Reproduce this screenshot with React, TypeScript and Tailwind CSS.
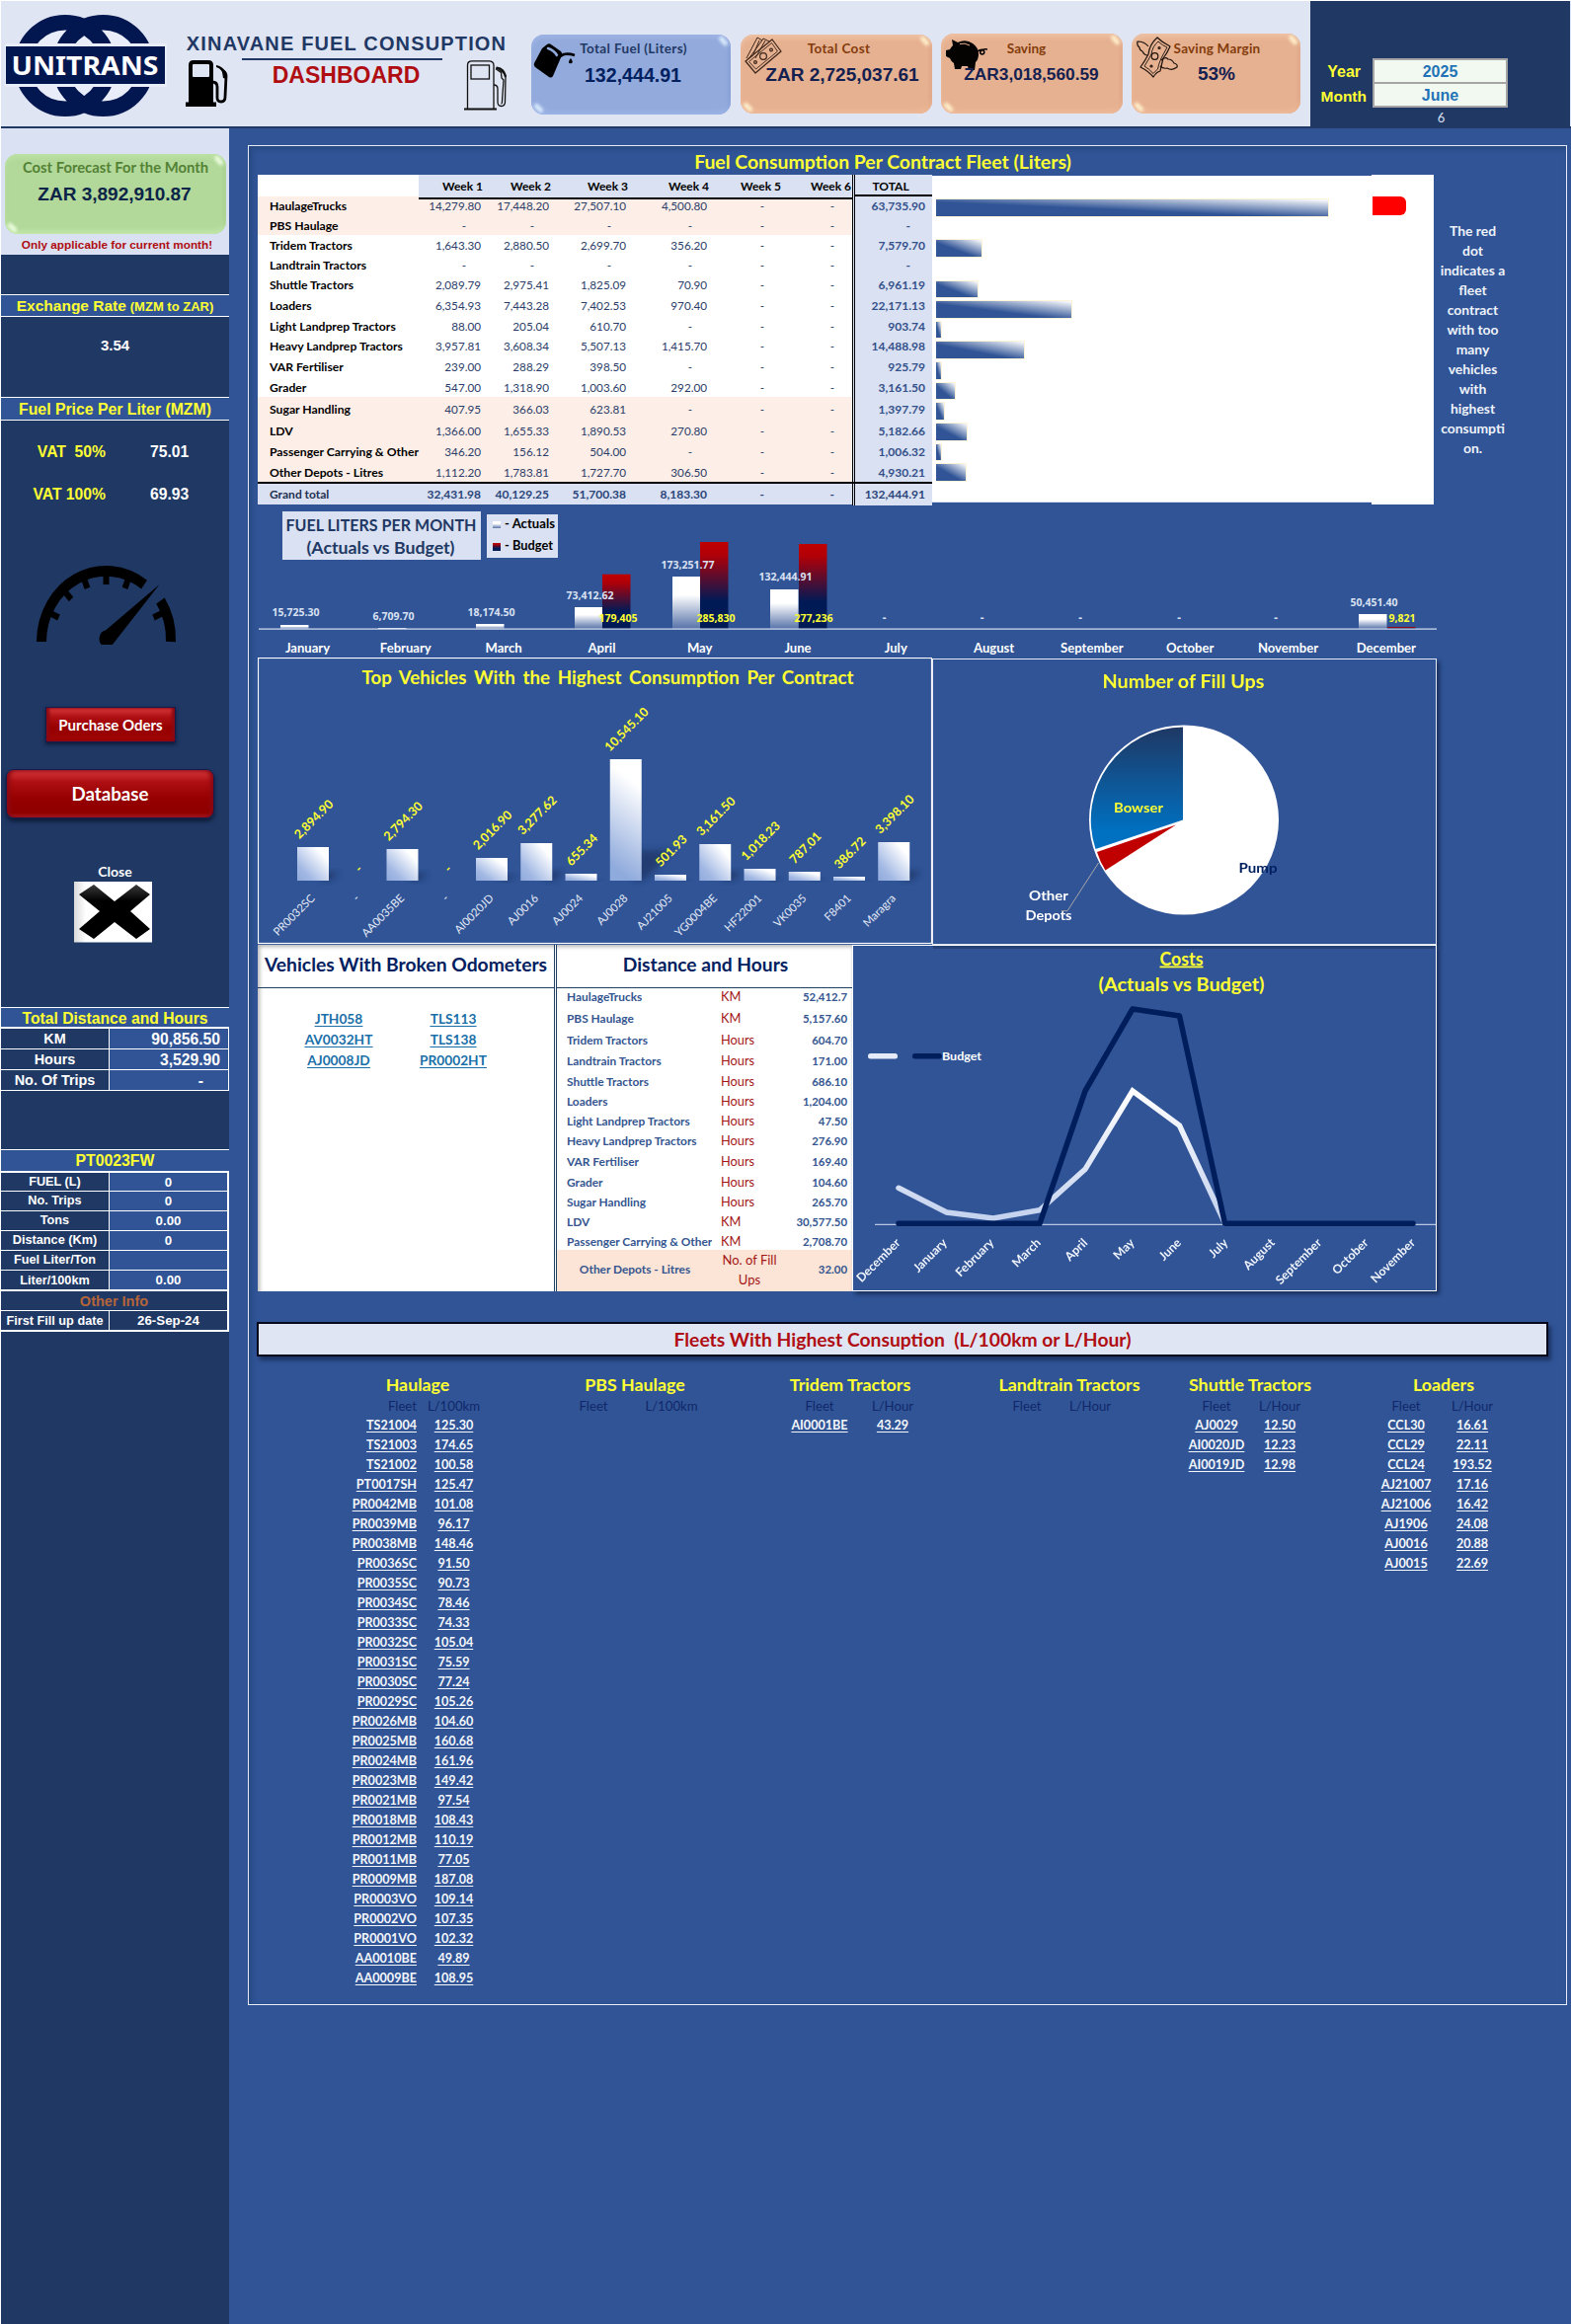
import React from "react";

const CAL = "font-['Lato',sans-serif]";
const ARI = "font-['Liberation_Sans',Arial,sans-serif]";

/* ---------------------------------------------------------------- header */

function Logo() {
  return (
    <svg className="mt-[13px] ml-[4px] shrink-0" width="164" height="106" viewBox="5 14 164 106">
      <circle cx="66" cy="66.5" r="36" fill="#e9edf9" />
      <circle cx="104.5" cy="66.5" r="36" fill="#e9edf9" />
      <circle cx="66" cy="66.5" r="43.7" fill="none" stroke="#02164f" strokeWidth="15.5" />
      <circle cx="104.5" cy="66.5" r="43.7" fill="none" stroke="#02164f" strokeWidth="15.5" />
      <rect x="5" y="44" width="164" height="44" fill="#e9edf9" />
      <rect x="6" y="47" width="161" height="38" fill="#02164f" />
      <text x="11.5" y="76" fontFamily="Noto Sans" fontWeight="700" fontSize="27" fill="#fff" textLength="149" lengthAdjust="spacingAndGlyphs">
        UNITRANS
      </text>
    </svg>
  );
}

function PumpSolid() {
  return (
    <svg width="43" height="47" viewBox="0 0 43 47">
      <path d="M3 5Q3 0 8 0H23Q28 0 28 5V43H3Z" fill="#000" />
      <rect x="7" y="4" width="17" height="13" rx="1" fill="#e0e5f3" />
      <rect x="0" y="42.500" width="31" height="4.500" fill="#000" />
      <path d="M27 22Q32 22 32 27V38Q32 42 36 42Q40 42 40 37L41 16Q41 13 38 11" fill="none" stroke="#000" strokeWidth="2.800" />
      <path d="M31 5Q37 6 41 12L42 19L38 18L37 12Q35 8 31 7Z" fill="#000" />
    </svg>
  );
}

function PumpOutline() {
  return (
    <svg width="43" height="51" viewBox="0 0 43 51" fill="none" stroke="#111" strokeWidth="1.300">
      <path d="M3.500 49V5Q3.500 .8 8 .8H25Q30 .8 30 5V49" />
      <path d="M0 49.500H33" strokeWidth="1.800" />
      <rect x="7" y="5" width="18.500" height="14" />
      <path d="M30 25Q34 25 34 29V42Q34 46.500 37.500 46.500Q41.500 46.500 41.500 42L42 17Q42 14 39 12L33 7.500L32.500 9L37.500 12.500L38 18L40 20L38.500 42Q38.500 44 37.500 44" />
      <path d="M33 7.500Q40 8 42 17" strokeWidth="2.200" />
    </svg>
  );
}

function JugIcon() {
  return (
    <svg width="43" height="37" viewBox="0 0 43 37">
      <path d="M14 2Q16 .5 18 2L28 9Q30 11 29 13L20 34Q18.500 36.500 16 35L2 25Q0 23 1 21L9 6Z" fill="#000" />
      <path d="M15 6Q21 8 24 13" fill="none" stroke="#93aadc" strokeWidth="2.600" strokeLinecap="round" />
      <path d="M25 15L31 12Q36 11 42 13" fill="none" stroke="#000" strokeWidth="2.600" />
      <path d="M38 16Q41 20 39 21Q36 22 36 20Q36 18 38 16Z" fill="#000" />
    </svg>
  );
}

function BillsIcon() {
  return (
    <svg width="38" height="38" viewBox="0 0 38 38" fill="none" stroke="#3b2418" strokeWidth="1.200" strokeLinejoin="round">
      <path d="M1 25L28 3L37 15L11 37Z" />
      <path d="M4.500 25.500L27.500 6.500L33.500 15L11.500 33Z" strokeWidth=".9" />
      <circle cx="19" cy="20" r="3.400" />
      <circle cx="11" cy="26" r="1.400" />
      <circle cx="27" cy="13.500" r="1.400" />
      <path d="M2 22L13 1L18 4M4 23L17 5L19 2L25 5M9 18L15 4" strokeWidth="1" />
      <path d="M11 22L21 4" strokeWidth="1" />
    </svg>
  );
}

function PiggyIcon() {
  return (
    <svg width="42" height="31" viewBox="0 0 42 31">
      <path d="M6 0L12 3Q20 -1 27 4Q33 8 33 15Q33 20 30 23L29 31H23L22 27H16L15 30H9L8 24Q5 22 4 19L0 17V11L4 10Q5 8 7 6Z" fill="#050302" />
      <path d="M14 4.500Q19 3 24 6" fill="none" stroke="#e6b191" strokeWidth="1" />
      <path d="M32 12Q36 9 38 11Q40 14 37 15Q34 15 35 12Q37 9 42 10" fill="none" stroke="#050302" strokeWidth="1.600" />
    </svg>
  );
}

function WingedBillIcon() {
  return (
    <svg width="42" height="42" viewBox="0 0 42 42" fill="none" stroke="#1c120c" strokeWidth="1.200" strokeLinejoin="round">
      <path d="M21 1Q26 6 34 10Q31 17 27 22Q25 30 24 35Q20 36 17 41Q12 35 4 31Q9 24 12 18Q13 8 21 1Z" />
      <path d="M22 5Q26 9 31 11Q27 18 25 22Q22 29 21.500 33Q19 35 17 37.500Q13 33 8 30Q13 22 15 18Q16 10 22 5Z" strokeWidth=".9" />
      <circle cx="18.500" cy="20" r="3.300" />
      <circle cx="23" cy="11.500" r="1" />
      <circle cx="15" cy="30" r="1" />
      <path d="M12 10Q8 5 1 5Q0 9 3 11Q3 14 6 15Q8 19 11 19" />
      <path d="M25 24Q29 20 32 23Q36 23 38 27Q42 28 41 31Q36 35 31 32Q27 33 24 30" />
    </svg>
  );
}

function Bevel({ light }: { light: string }) {
  return (
    <span className="absolute inset-0 overflow-hidden rounded-[13px]">
      <span className={`absolute top-[4px] right-[2px] h-[5px] w-[11px] rotate-[50deg] rounded-full blur-[1.5px] ${light}`} />
      <span className={`absolute bottom-[4px] left-[2px] h-[5px] w-[11px] rotate-[45deg] rounded-full blur-[1.5px] ${light}`} />
    </span>
  );
}

type CardProps = { box: string; light: string; icon?: React.ReactNode; iconPos?: string; title: string; titleCls: string; value: string; valueCls: string };

function Card({ box, light, icon, iconPos, title, titleCls, value, valueCls }: CardProps) {
  return (
    <div className={`relative shrink-0 rounded-[13px] text-center ${box}`}>
      <Bevel light={light} />
      <div className={`${CAL} font-bold whitespace-nowrap ${titleCls}`}>{title}</div>
      {icon && <span className={`absolute ${iconPos}`}>{icon}</span>}
      <div className={`relative ${ARI} font-bold whitespace-nowrap ${valueCls}`}>{value}</div>
    </div>
  );
}

const ORANGE = "bg-[#e6b191] shadow-[inset_0_5px_5px_-2px_#efc4a6,inset_0_-5px_5px_-2px_#efbb99,inset_-2px_0_3px_#dba283]";

function Header() {
  return (
    <header className="flex h-[129px] items-start border-b-2 border-[#203864] bg-[#e0e5f3]">
      <Logo />
      <div className="mt-[31px] flex w-[368px] shrink-0 flex-col">
        <h1 className={`${ARI} pr-[4px] text-center text-[20px] leading-[24px] font-bold tracking-[1.15px] whitespace-nowrap text-[#1f3864]`}>
          XINAVANE FUEL CONSUPTION
        </h1>
        <div className="mt-[3px] ml-[76px] h-[2px] w-[203px] bg-[#1f3864]" />
        <div className="flex items-start justify-between pr-[24px] pl-[19px]">
          <PumpSolid />
          <div className={`${ARI} text-[23px] leading-[31px] font-bold text-[#b00d12]`}>DASHBOARD</div>
          <PumpOutline />
        </div>
      </div>
      <div className="mt-[33px] ml-px flex items-start">
        <Card
          box="h-[81px] w-[202px] mt-px bg-[#93aadc] shadow-[inset_0_5px_5px_-2px_#a0b6e6,inset_0_-5px_5px_-2px_#9db5e8,inset_-2px_0_3px_#8098d0]"
          light="bg-[#d7e9fb]"
          icon={<JugIcon />}
          iconPos="left-[2px] top-[8px]"
          title="Total Fuel (Liters)"
          titleCls="mt-[5px] pl-[5px] text-[13.500px] leading-[18px] tracking-[0.35px] text-[#1f3864]"
          value="132,444.91"
          valueCls="mt-[8px] pl-[4px] text-[19.600px] leading-[20px] text-[#002060]"
        />
        <Card
          box={`mt-px ml-[10px] h-[80px] w-[194px] ${ORANGE}`}
          light="bg-[#fdecc8]"
          icon={<BillsIcon />}
          iconPos="left-[4px] top-[2px]"
          title="Total Cost"
          titleCls="mt-[5px] pl-[5px] text-[13.500px] leading-[18px] tracking-[0.35px] text-[#833c0b]"
          value="ZAR 2,725,037.61"
          valueCls="mt-[8px] pl-[12px] text-[19px] leading-[20px] text-[#14204f]"
        />
        <Card
          box={`ml-[9px] h-[81px] w-[184px] ${ORANGE}`}
          light="bg-[#fdecc8]"
          icon={<PiggyIcon />}
          iconPos="left-[5px] top-[6px]"
          title="Saving"
          titleCls="mt-[6px] pr-[11px] text-[13.500px] leading-[18px] text-[#833c0b]"
          value="ZAR3,018,560.59"
          valueCls="mt-[7px] pr-[1px] text-[17.300px] leading-[20px] text-[#14204f]"
        />
        <Card
          box={`ml-[9px] h-[81px] w-[171px] ${ORANGE}`}
          light="bg-[#fdecc8]"
          icon={<WingedBillIcon />}
          iconPos="left-[5px] top-[3px]"
          title="Saving Margin"
          titleCls="mt-[6px] pl-[2px] text-[13.500px] leading-[18px] tracking-[0.2px] text-[#833c0b]"
          value="53%"
          valueCls="mt-[7px] pl-[1px] text-[19px] leading-[20px] text-[#14204f]"
        />
      </div>
      <div className="ml-[10px] flex h-[127px] w-[263px] shrink-0 bg-[#203864] pt-[58px]">
        <div className={`${ARI} w-[63px] pr-[6px] text-right text-[15.500px] font-bold text-[#ffff33]`}>
          <div className="pr-[6px] text-[16px] leading-[27px]">Year</div>
          <div className="leading-[23px]">Month</div>
        </div>
        <div className="w-[137px] text-center">
          <div className={`${ARI} border-2 border-[#a5a5a5] bg-[#f2f9f1] text-[16px] font-bold text-[#1f72b5]`}>
            <div className="h-[24px] border-b-2 border-[#a5a5a5] leading-[24px]">2025</div>
            <div className="h-[22px] leading-[23px]">June</div>
          </div>
          <div className={`${CAL} pl-[2px] text-[13px] leading-[21px] text-[#d9e1f2]`}>6</div>
        </div>
      </div>
    </header>
  );
}

/* --------------------------------------------------------------- sidebar */

function Band({ children, cls }: { children: React.ReactNode; cls: string }) {
  return <div className={`${ARI} border-white bg-[#305496] text-center font-bold whitespace-nowrap text-[#ffff33] ${cls}`}>{children}</div>;
}

function Gauge() {
  const ticks = [25, 48, 69, 90, 111, 155];
  return (
    <svg className="ml-[35px] block" width="144" height="82" viewBox="36 571 144 82">
      <g transform="translate(107.500 650) scale(1 1.093)">
        <path d="M-65.500 0A65.500 65.500 0 0 1 38.500 -53" fill="none" stroke="#000" strokeWidth="10" />
        <path d="M55 -38A66 66 0 0 1 65.500 0" fill="none" stroke="#000" strokeWidth="10" />
        {ticks.map((t) => (
          <rect key={t} x="-62" y="-3" width="9" height="6" transform={`rotate(${t})`} fill="#000" />
        ))}
        <path d="M54 -53L6.500 2.500A6.500 6 0 0 1 -5 -7Z" fill="#000" />
        <circle cx="0" cy="-4" r="6.500" fill="#000" />
      </g>
    </svg>
  );
}

function InfoRow({ a, b, cls, aCls, bCls = "" }: { a: string; b: string; cls: string; aCls: string; bCls?: string }) {
  return (
    <div className={`flex border-b border-white ${cls}`}>
      <div className={`w-[110px] border-r border-white bg-[#203864] text-center whitespace-nowrap ${aCls}`}>{a}</div>
      <div className={`flex-1 ${bCls || "bg-[#305496] text-center"}`}>{b}</div>
    </div>
  );
}

function Sidebar() {
  return (
    <aside className="h-[2224px] w-[231px] shrink-0 bg-[#203864]">
      <div className="h-[128px] bg-[#d9e1f2] pt-[26px] pl-[4px]">
        <Card
          box="h-[81px] w-[224px] bg-[#b2d89a] pt-[4px] shadow-[inset_0_5px_5px_-2px_#bde3a6,inset_0_-5px_5px_-2px_#c4e9ab,inset_-2px_0_3px_#a3cc8b]"
          light="bg-[#e9fbda]"
          title="Cost Forecast For the Month"
          titleCls="text-[14.800px] leading-[18px] text-[#548235]"
          value="ZAR 3,892,910.87"
          valueCls="mt-[9px] pr-[2px] text-[19px] leading-[20px] text-[#0b2447]"
        />
        <div className={`${ARI} mt-[2px] text-center text-[11.800px] leading-[18px] font-bold whitespace-nowrap text-[#b00d12]`}>
          Only applicable for current month!
        </div>
      </div>

      <Band cls="mt-[40px] h-[23px] border-y text-[14px] leading-[22px]">
        <span className="text-[15.500px]">Exchange Rate</span> <span className="text-[13px]">(MZM to ZAR)</span>
      </Band>
      <div className={`${ARI} pt-[19px] text-center text-[15px] leading-[20px] font-bold text-white`}>3.54</div>

      <Band cls="mt-[42px] h-[24px] border-y text-[15.800px] leading-[23px]">Fuel Price Per Liter (MZM)</Band>
      <div className={`${ARI} mt-[21px] text-[15.700px] leading-[22px] font-bold text-white`}>
        <div className="flex">
          <div className="w-[106px] text-right whitespace-pre text-[#ffff33]">VAT  50%</div>
          <div className="ml-[45px]">75.01</div>
        </div>
        <div className="mt-[21px] flex">
          <div className="w-[106px] text-right whitespace-pre text-[#ffff33]">VAT 100%</div>
          <div className="ml-[45px]">69.93</div>
        </div>
      </div>

      <div className="pt-[59px]">
        <Gauge />
      </div>

      <button
        className={`${CAL} mt-[63px] ml-[45px] block h-[36px] w-[132px] border border-[#1b1a4c] bg-[linear-gradient(#d8393d,#ae0f12_28%,#960000_60%,#a00505)] text-[15px] font-bold whitespace-nowrap text-white shadow-[0_2px_4px_#0d1a36,inset_3px_0_3px_#8a0a14,inset_-3px_0_3px_#8a0a14]`}
      >
        Purchase Oders
      </button>
      <button
        className={`${CAL} mt-[27px] ml-[5px] block h-[50px] w-[211px] rounded-[8px] border border-[#1b1a4c] bg-[linear-gradient(#d8393d,#ae0f12_25%,#960000_60%,#8e0000_90%,#b02020)] text-[18.700px] font-bold text-white shadow-[0_3px_4px_#0d1a36,inset_3px_0_4px_#8a0a14,inset_-3px_0_4px_#8a0a14]`}
      >
        Database
      </button>
      <div className={`${CAL} mt-[44px] text-center text-[14px] leading-[20px] font-bold text-white`}>Close</div>
      <svg className="ml-[74px] block" width="80" height="62" viewBox="0 0 80 62">
        <defs>
          <linearGradient id="xbg" x1="0" x2="1">
            <stop offset="0" stopColor="#d9d9d9" />
            <stop offset=".15" stopColor="#fff" />
          </linearGradient>
          <linearGradient id="xfg" x1="0" y1="0" x2="0" y2="1">
            <stop offset="0" stopColor="#3a3a3a" />
            <stop offset=".3" stopColor="#000" />
          </linearGradient>
        </defs>
        <rect width="79" height="61.500" fill="url(#xbg)" />
        <path d="M5 13L20 3L41 20L63 3L77 13L57 30L77 48L63 58L41 41L20 58L5 48L26 30Z" fill="url(#xfg)" />
      </svg>

      <Band cls="mt-[65px] h-[20px] border-t text-[15.700px] leading-[22px]">Total Distance and Hours</Band>
      <div className={`${ARI} border-t-2 border-r border-white text-[15.700px] leading-[21px] font-bold text-white`}>
        <InfoRow cls="h-[21px]" aCls="text-[14.400px]" a="KM" b="90,856.50" bCls="bg-[#305496] text-right pr-[8px]" />
        <InfoRow cls="h-[21px]" aCls="text-[14.400px]" a="Hours" b="3,529.90" bCls="bg-[#305496] text-right pr-[8px]" />
        <InfoRow cls="h-[21px]" aCls="text-[14.400px]" a="No. Of Trips" b="-" bCls="bg-[#305496] text-right pr-[25px]" />
      </div>

      <Band cls="mt-[59px] h-[22px] border-t text-[15.800px] leading-[22px]">PT0023FW</Band>
      <div className={`${ARI} border-t-2 border-r-2 border-white text-[13.300px] leading-[19px] font-bold text-white`}>
        <InfoRow cls="h-[19px]" aCls="text-[12.700px]" a="FUEL (L)" b="0" />
        <InfoRow cls="h-[20px]" aCls="text-[12.700px]" a="No. Trips" b="0" />
        <InfoRow cls="h-[20px]" aCls="text-[12.700px]" a="Tons" b="0.00" />
        <InfoRow cls="h-[20px]" aCls="text-[12.700px]" a="Distance (Km)" b="0" />
        <InfoRow cls="h-[20px]" aCls="text-[12.700px]" a="Fuel Liter/Ton" b="" />
        <InfoRow cls="h-[21px] border-b-2 leading-[20px]" aCls="text-[12.700px]" a="Liter/100km" b="0.00" />
        <div className="h-[20px] border-b border-white bg-[#203864] text-center text-[14.500px] leading-[20px] text-[#b5653a]">Other Info</div>
        <InfoRow cls="h-[21px] border-b-2 leading-[20px]" aCls="text-[12.700px]" a="First Fill up date" b="26-Sep-24" bCls="bg-[#203864] text-center" />
      </div>
    </aside>
  );
}

/* ------------------------------------------------------------- top table */

type Row = { n: string; v: string[]; t: string; h: string; pink?: boolean };
const rows: Row[] = [
  { n: "HaulageTrucks", v: ["14,279.80", "17,448.20", "27,507.10", "4,500.80", "-", "-"], t: "63,735.90", h: "h-[19px]", pink: true },
  { n: "PBS Haulage", v: ["-", "-", "-", "-", "-", "-"], t: "-", h: "h-[20px]", pink: true },
  { n: "Tridem Tractors", v: ["1,643.30", "2,880.50", "2,699.70", "356.20", "-", "-"], t: "7,579.70", h: "h-[20px]" },
  { n: "Landtrain Tractors", v: ["-", "-", "-", "-", "-", "-"], t: "-", h: "h-[20px]" },
  { n: "Shuttle Tractors", v: ["2,089.79", "2,975.41", "1,825.09", "70.90", "-", "-"], t: "6,961.19", h: "h-[20px]" },
  { n: "Loaders", v: ["6,354.93", "7,443.28", "7,402.53", "970.40", "-", "-"], t: "22,171.13", h: "h-[21px]" },
  { n: "Light Landprep Tractors", v: ["88.00", "205.04", "610.70", "-", "-", "-"], t: "903.74", h: "h-[21px]" },
  { n: "Heavy Landprep Tractors", v: ["3,957.81", "3,608.34", "5,507.13", "1,415.70", "-", "-"], t: "14,488.98", h: "h-[20px]" },
  { n: "VAR Fertiliser", v: ["239.00", "288.29", "398.50", "-", "-", "-"], t: "925.79", h: "h-[21px]" },
  { n: "Grader", v: ["547.00", "1,318.90", "1,003.60", "292.00", "-", "-"], t: "3,161.50", h: "h-[21px]" },
  { n: "Sugar Handling", v: ["407.95", "366.03", "623.81", "-", "-", "-"], t: "1,397.79", h: "h-[22px]", pink: true },
  { n: "LDV", v: ["1,366.00", "1,655.33", "1,890.53", "270.80", "-", "-"], t: "5,182.66", h: "h-[22px]", pink: true },
  { n: "Passenger Carrying & Other", v: ["346.20", "156.12", "504.00", "-", "-", "-"], t: "1,006.32", h: "h-[21px]", pink: true },
  { n: "Other Depots - Litres", v: ["1,112.20", "1,783.81", "1,727.70", "306.50", "-", "-"], t: "4,930.21", h: "h-[21px]", pink: true },
];
const GRID = "grid grid-cols-[163px_66px_69px_78px_82px_73px_71px_81px]";
const TOT = "border-l-[3px] border-double border-black bg-[#d9e1f2]";

function WeekTable() {
  return (
    <div className={`${CAL} h-[334px] w-[683px] shrink-0 bg-white text-[12px]`}>
      <div className={`${GRID} h-[22px] font-bold text-black`}>
        <div />
        {["Week 1", "Week 2", "Week 3", "Week 4", "Week 5", "Week 6"].map((w) => (
          <div key={w} className="border-b-2 border-black bg-[#d9e1f2] pr-px text-right leading-[23px]">
            {w}
          </div>
        ))}
        <div className={`${TOT} pr-[4px] text-center`}>
          <div className="-mr-[4px] h-[22px] border-b-2 border-solid border-black pr-[6px] leading-[23px]">TOTAL</div>
        </div>
      </div>
      {rows.map((r) => (
        <div key={r.n} className={`${GRID} ${r.h} items-end ${r.pink ? "bg-[#fdeee7]" : "bg-white"}`}>
          <div className="pl-[12px] text-[12.200px] leading-[19px] font-bold whitespace-nowrap text-black">{r.n}</div>
          {r.v.map((v, i) => (
            <div key={i} className={`text-right text-[11.700px] leading-[19px] text-[#2b3d68] ${v === "-" ? "pr-[18px]" : "pr-[3px]"}`}>
              {v}
            </div>
          ))}
          <div className={`${TOT} flex h-full items-end justify-end leading-[19px] font-bold text-[#34508a] ${r.t === "-" ? "pr-[22px]" : "pr-[7px]"}`}>{r.t}</div>
        </div>
      ))}
      <div className={`${GRID} h-[23px] border-t-2 border-black bg-[#d9e1f2] leading-[22px] font-bold text-[#2a4479]`}>
        <div className="pl-[12px] text-[#1f2f50]">Grand total</div>
        {["32,431.98", "40,129.25", "51,700.38", "8,183.30", "-", "-"].map((v, i) => (
          <div key={i} className={`text-right ${v === "-" ? "pr-[18px]" : "pr-[3px]"}`}>
            {v}
          </div>
        ))}
        <div className={`${TOT} pr-[7px] text-right`}>132,444.91</div>
      </div>
    </div>
  );
}

function FleetBars() {
  const vals = [63735.9, 0, 7579.7, 0, 6961.19, 22171.13, 903.74, 14488.98, 925.79, 3161.5, 1397.79, 5182.66, 1006.32, 4930.21];
  return (
    <div className="mt-px flex h-[331px] w-[445px] shrink-0 flex-col gap-[2px] border-b border-[#d9e1f2] bg-white pt-[23px] pl-[4px]">
      {vals.map((v, i) => (
        <div
          key={i}
          className={`h-[18.650px] shrink-0 ${v ? "border border-l-0 border-[#fdf3d9] bg-[linear-gradient(to_top_right,#305496_42%,#fff)]" : ""}`}
          style={{ width: v * 0.006245 }}
        />
      ))}
    </div>
  );
}

/* ---------------------------------------------------------- month chart */

type TxProps = React.SVGProps<SVGTextElement> & { w?: number };
function Tx({ w, children, ...p }: TxProps) {
  return (
    <text fontFamily="Lato" fontWeight="700" textAnchor="middle" {...(w ? { textLength: w, lengthAdjust: "spacingAndGlyphs" } : {})} {...p}>
      {children}
    </text>
  );
}

const Y = "#ffff33";

function MonthChart() {
  const months = ["January", "February", "March", "April", "May", "June", "July", "August", "September", "October", "November", "December"];
  const act: [number, number, string, number, number][] = [
    [284, 633, "15,725.30", 624, 48],
    [383, 636, "6,709.70", 627.5, 42],
    [482, 632, "18,174.50", 623.5, 48],
    [582, 615, "73,412.62", 606.5, 48],
    [681, 584, "173,251.77", 575.5, 54],
    [780, 597, "132,444.91", 587.5, 54],
    [1376, 622, "50,451.40", 613.5, 48],
  ];
  const bud: [number, number, string, number, number][] = [
    [610, 581.7, "179,405", 626, 39],
    [709, 549, "285,830", 725, 39],
    [809, 551, "277,236", 824, 39],
    [1405, 635, "9,821", 1420, 27],
  ];
  return (
    <svg className="ml-[9px] block" width="1194" height="155" viewBox="261 511 1194 155">
      <defs>
        <linearGradient id="ga" x1="0" y1="0" x2="0" y2="1">
          <stop offset=".35" stopColor="#fff" />
          <stop offset="1" stopColor="#5672a8" />
        </linearGradient>
        <linearGradient id="gb" x1="0" y1="0" x2="0" y2="1">
          <stop offset="0" stopColor="#c00000" />
          <stop offset=".15" stopColor="#b00008" />
          <stop offset=".68" stopColor="#001a56" />
        </linearGradient>
      </defs>
      <rect x="286" y="518" width="201" height="49" fill="#d9e1f2" />
      <Tx x="386" y="538" fontSize="16.800" fill="#1f3864" w={193}>FUEL LITERS PER MONTH</Tx>
      <Tx x="385.500" y="561" fontSize="16.800" fill="#1f3864" w={150}>(Actuals vs Budget)</Tx>
      <rect x="493" y="521" width="72" height="44" fill="#d9e1f2" />
      <rect x="499" y="528" width="8" height="7" fill="url(#ga)" />
      <rect x="499" y="550" width="8" height="8" fill="url(#gb)" />
      <Tx x="511" y="535" fontSize="13" textAnchor="start" w={51}>- Actuals</Tx>
      <Tx x="511" y="557" fontSize="13" textAnchor="start" w={49}>- Budget</Tx>
      {act.map((a) => (
        <rect key={a[0]} x={a[0]} y={a[1]} width="28.500" height={637 - a[1]} fill="url(#ga)" />
      ))}
      {bud.map((b) => (
        <rect key={b[0]} x={b[0]} y={b[1]} width="28.500" height={637 - b[1]} fill="url(#gb)" />
      ))}
      <rect x="262" y="636.500" width="1193" height="1.200" fill="#d9e1f2" />
      {act.map((a) => (
        <Tx key={a[2]} x={a[0] + 15.5} y={a[3]} fontSize="10.500" fontFamily="Open Sans" fill="#d9e1f2" w={a[4]}>{a[2]}</Tx>
      ))}
      {bud.map((b) => (
        <Tx key={b[2]} x={b[3]} y="629.500" fontSize="10.300" fontFamily="Open Sans" fill={Y} w={b[4]}>{b[2]}</Tx>
      ))}
      {[895.6, 994.5, 1094, 1194, 1292].map((x) => (
        <Tx key={x} x={x} y="629.500" fontSize="11.500" fontFamily="Open Sans" fill="#d9e1f2">-</Tx>
      ))}
      {months.map((m, i) => (
        <Tx key={m} x={311.5 + i * 99.3} y="661" fontSize="13.100" fill="#fff">{m}</Tx>
      ))}
    </svg>
  );
}

/* -------------------------------------------------------- vehicle chart */

function VehicleChart() {
  const d: [string, string, number][] = [
    ["PR0032SC", "2,894.90", 858],
    ["-", "-", 892],
    ["AA0035BE", "2,794.30", 860],
    ["-", "-", 892],
    ["AI0020JD", "2,016.90", 869],
    ["AJ0016", "3,277.62", 854],
    ["AJ0024", "655.34", 885],
    ["AJ0028", "10,545.10", 769],
    ["AJ21005", "501.93", 886],
    ["YG0004BE", "3,161.50", 855],
    ["HF22001", "1,018.23", 880],
    ["VK0035", "787.01", 883],
    ["F8401", "386.72", 888],
    ["Maragra", "3,398.10", 853],
  ];
  return (
    <svg className="block shrink-0" width="683" height="291" viewBox="261 666 683 291">
      <defs>
        <linearGradient id="gv" x1="0" y1="1" x2="1" y2="0">
          <stop offset="0" stopColor="#8faadc" />
          <stop offset=".25" stopColor="#a3b9e4" />
          <stop offset=".8" stopColor="#fff" />
        </linearGradient>
        <linearGradient id="gvt" x1=".4" y1="1" x2=".6" y2="0">
          <stop offset=".05" stopColor="#8faadc" />
          <stop offset=".85" stopColor="#fff" />
        </linearGradient>
        <filter id="bl" x="-50%" y="-50%" width="200%" height="200%">
          <feGaussianBlur stdDeviation="3" />
        </filter>
      </defs>
      <rect x="261.500" y="666.500" width="682" height="289" fill="#305496" stroke="#fff" strokeWidth="1.200" />
      <Tx x="615.500" y="693" fontSize="18" wordSpacing="3" fill={Y} w={498}>Top Vehicles With the Highest Consumption Per Contract</Tx>
      {d.map(([, v, top], i) => {
        const x = 301 + i * 45.25;
        const h = 892 - top;
        return v === "-" ? null : (
          <path key={i} d={`M${x + 24} 892H${x + 34}L${x + 34 + h * 0.25} ${892 - h * 0.25}H${x + 28}Z`} fill="#14264f" opacity=".5" filter="url(#bl)" />
        );
      })}
      {d.map(([c, v, top], i) => {
        const x = 301 + i * 45.25;
        const cx = x + 16;
        const off = v === "-" ? 12 : v.length > 8 ? 30 : v.length > 6 ? 28 : 24;
        return (
          <g key={i}>
            {v !== "-" && <rect x={x} y={top} width="32" height={892 - top} fill={top < 800 ? "url(#gvt)" : "url(#gv)"} />}
            <Tx transform={`translate(${cx + 1} ${top - off}) rotate(-45)`} y="4" fontSize="12.500" fill={Y}>{v}</Tx>
            <Tx transform={`translate(${cx - 1} 907) rotate(-45)`} y="5" textAnchor="end" fontSize="11.300" fontWeight="400" fill="#e4eaf7">{c}</Tx>
          </g>
        );
      })}
    </svg>
  );
}

function PieChart() {
  return (
    <svg className="block shrink-0 overflow-visible drop-shadow-[3px_3px_2px_#1a2f5c]" width="511" height="290" viewBox="944 667 511 290">
      <defs>
        <linearGradient id="gp" x1="0" y1="0" x2="0" y2="1">
          <stop offset="0" stopColor="#1f3864" />
          <stop offset=".85" stopColor="#0070c0" />
        </linearGradient>
      </defs>
      <rect x="944.500" y="667.500" width="510" height="289" fill="#305496" stroke="#e6ebf6" strokeWidth="1" />
      <Tx x="1198.500" y="696.500" fontSize="18" fill={Y} w={164}>Number of Fill Ups</Tx>
      <circle cx="1199" cy="830.500" r="96" fill="#fff" />
      <path d="M1198 830.500V736.500A94 94 0 0 0 1109.500 860Z" fill="url(#gp)" />
      <path d="M1191 835.500L1111 863Q1114 873 1119.500 881.500Z" fill="#c00000" />
      <path d="M1112.500 874L1081 922.700H1075" fill="none" stroke="#a6a6a6" strokeWidth="1" />
      <Tx x="1153" y="823" fontSize="13.500" fill={Y} w={50}>Bowser</Tx>
      <Tx x="1274" y="884" fontSize="13.500" fill="#002060" w={39}>Pump</Tx>
      <Tx x="1062" y="912" fontSize="13.500" fill="#fff" w={40}>Other</Tx>
      <Tx x="1062" y="932" fontSize="13.500" fill="#fff" w={47}>Depots</Tx>
    </svg>
  );
}

/* ------------------------------------------------------ lower panel row */

function Odometers() {
  return (
    <div className={`${CAL} h-[351px] w-[300px] shrink-0 bg-white shadow-[inset_4px_4px_4px_-2px_#b5b5b5] font-bold`}>
      <div className="h-[44px] border-b border-[#1f4060] text-center text-[19.300px] leading-[39px] whitespace-nowrap text-[#002060]">
        Vehicles With Broken Odometers
      </div>
      <div className="mt-[20px] grid grid-cols-[116px_116px] pl-[24px] text-center text-[13.700px] leading-[21px] text-[#1a6fa8] underline underline-offset-2">
        {["JTH058", "TLS113", "AV0032HT", "TLS138", "AJ0008JD", "PR0002HT"].map((t) => (
          <a key={t}>{t}</a>
        ))}
      </div>
    </div>
  );
}

const dist: [string, string, string, string][] = [
  ["HaulageTrucks", "KM", "52,412.7", "h-[20px]"],
  ["PBS Haulage", "KM", "5,157.60", "h-[22px]"],
  ["Tridem Tractors", "Hours", "604.70", "h-[22px]"],
  ["Landtrain Tractors", "Hours", "171.00", "h-[21px]"],
  ["Shuttle Tractors", "Hours", "686.10", "h-[21px]"],
  ["Loaders", "Hours", "1,204.00", "h-[20px]"],
  ["Light Landprep Tractors", "Hours", "47.50", "h-[20px]"],
  ["Heavy Landprep Tractors", "Hours", "276.90", "h-[20px]"],
  ["VAR Fertiliser", "Hours", "169.40", "h-[21px]"],
  ["Grader", "Hours", "104.60", "h-[21px]"],
  ["Sugar Handling", "Hours", "265.70", "h-[20px]"],
  ["LDV", "KM", "30,577.50", "h-[20px]"],
  ["Passenger Carrying & Other", "KM", "2,708.70", "h-[20px]"],
];

function Distances() {
  return (
    <div className={`${CAL} h-[351px] w-[302px] shrink-0 border-l-[3px] border-double border-[#1f4060] bg-white text-[11.900px] font-bold text-[#34558f] shadow-[inset_0_4px_4px_-2px_#b5b5b5]`}>
      <div className="h-[44px] border-b border-[#1f4060] pl-[2px] text-center text-[19.200px] leading-[39px] text-[#002060]">Distance and Hours</div>
      {dist.map(([n, u, v, h]) => (
        <div key={n} className={`flex items-end pb-[2px] leading-[19px] ${h}`}>
          <div className="ml-[10px] w-[147px] overflow-hidden whitespace-nowrap">{n}</div>
          <div className="w-[62px] pl-[9px] text-[12.800px] font-normal text-[#a31515]">{u}</div>
          <div className="flex-1 pr-[5px] text-right text-[11.400px]">{v}</div>
        </div>
      ))}
      <div className="mt-[-3px] flex h-[42px] items-center bg-[#fce4d6] pb-[2px]">
        <div className="w-[158px] text-center">Other Depots - Litres</div>
        <div className="w-[74px] text-center text-[13px] leading-[20px] font-normal text-[#a31515]">
          No. of Fill
          <br />
          Ups
        </div>
        <div className="flex-1 pr-[5px] text-right text-[11.400px]">32.00</div>
      </div>
    </div>
  );
}

function Costs() {
  const m = ["December", "January", "February", "March", "April", "May", "June", "July", "August", "September", "October", "November"];
  return (
    <svg className="block shrink-0 overflow-visible drop-shadow-[3px_3px_2px_#1a2f5c]" width="592" height="351" viewBox="863 957 592 351">
      <defs>
        <linearGradient id="gl" gradientUnits="userSpaceOnUse" x1="0" y1="1105" x2="0" y2="1239">
          <stop offset="0" stopColor="#fff" />
          <stop offset="1" stopColor="#c3d1ee" />
        </linearGradient>
      </defs>
      <rect x="863.500" y="957.500" width="591" height="350" fill="#305496" stroke="#fff" strokeWidth="1" />
      <rect x="945" y="958" width="508" height="3" fill="#1f3864" opacity=".6" />
      <Tx x="1196.500" y="977.500" fontSize="18" fill={Y} w={44} textDecoration="underline">Costs</Tx>
      <Tx x="1196.500" y="1003.500" fontSize="18" fill={Y} w={168}>(Actuals vs Budget)</Tx>
      <rect x="886" y="1239.800" width="568" height="1" fill="#d9e1f2" />
      <polyline fill="none" stroke="url(#gl)" strokeWidth="5.500" strokeLinecap="round" strokeLinejoin="miter" points="910,1203.300 958.700,1228 1006,1234 1053,1225.700 1099,1184.300 1147,1105 1194.500,1140 1240.500,1239" />
      <polyline fill="none" stroke="#001d5c" strokeWidth="5.500" strokeLinecap="round" strokeLinejoin="round" points="910,1239.300 1053,1239.300 1099,1105 1147,1022 1194.500,1029 1240.500,1239.300 1431,1239.300" />
      <rect x="879" y="1067" width="30" height="5.500" rx="2.500" fill="#e4eaf8" />
      <rect x="924" y="1067" width="30" height="5.500" rx="2.500" fill="#001d5c" />
      <Tx x="954" y="1074" fontSize="11.800" textAnchor="start" fill="#fff" w={40}>Budget</Tx>
      {m.map((t, i) => (
        <Tx key={t} transform={`translate(${909 + i * 47.4} 1256) rotate(-45)`} y="5" textAnchor="end" fontSize="12.300" fill="#f0f4fc">
          {t}
        </Tx>
      ))}
    </svg>
  );
}

/* ---------------------------------------------------------- fleet lists */

type Fleet = { title: string; unit: string; ml: string; pad: string; a: string; b: string; rows: [string, string][] };
const fleets: Fleet[] = [
  {
    title: "Haulage", unit: "L/100km", ml: "ml-[91px]", pad: "pl-0", a: "w-[79px] text-right", b: "w-[75px]",
    rows: [
      ["TS21004", "125.30"], ["TS21003", "174.65"], ["TS21002", "100.58"], ["PT0017SH", "125.47"], ["PR0042MB", "101.08"], ["PR0039MB", "96.17"],
      ["PR0038MB", "148.46"], ["PR0036SC", "91.50"], ["PR0035SC", "90.73"], ["PR0034SC", "78.46"], ["PR0033SC", "74.33"], ["PR0032SC", "105.04"],
      ["PR0031SC", "75.59"], ["PR0030SC", "77.24"], ["PR0029SC", "105.26"], ["PR0026MB", "104.60"], ["PR0025MB", "160.68"], ["PR0024MB", "161.96"],
      ["PR0023MB", "149.42"], ["PR0021MB", "97.54"], ["PR0018MB", "108.43"], ["PR0012MB", "110.19"], ["PR0011MB", "77.05"], ["PR0009MB", "187.08"],
      ["PR0003VO", "109.14"], ["PR0002VO", "107.35"], ["PR0001VO", "102.32"], ["AA0010BE", "49.89"], ["AA0009BE", "108.95"],
    ],
  },
  { title: "PBS Haulage", unit: "L/100km", ml: "ml-[60px]", pad: "pl-0", a: "w-[76px] text-center", b: "w-[82px]", rows: [] },
  { title: "Tridem Tractors", unit: "L/Hour", ml: "ml-[58px]", pad: "pl-[8px]", a: "w-[82px] text-center", b: "w-[66px]", rows: [["AI0001BE", "43.29"]] },
  { title: "Landtrain Tractors", unit: "L/Hour", ml: "ml-[62px]", pad: "pl-[2px]", a: "w-[70px] text-center", b: "w-[58px]", rows: [] },
  {
    title: "Shuttle Tractors", unit: "L/Hour", ml: "ml-[23px]", pad: "pl-[10px]", a: "w-[72px] text-center", b: "w-[56px]",
    rows: [["AJ0029", "12.50"], ["AI0020JD", "12.23"], ["AI0019JD", "12.98"]],
  },
  {
    title: "Loaders", unit: "L/Hour", ml: "ml-[36px]", pad: "pl-[7px]", a: "w-[70px] text-center", b: "w-[64px]",
    rows: [["CCL30", "16.61"], ["CCL29", "22.11"], ["CCL24", "193.52"], ["AJ21007", "17.16"], ["AJ21006", "16.42"], ["AJ1906", "24.08"], ["AJ0016", "20.88"], ["AJ0015", "22.69"]],
  },
];

function FleetLists() {
  return (
    <div className={`${CAL} mt-[16px] flex items-start`}>
      {fleets.map((f) => (
        <div key={f.title} className={`w-[160px] shrink-0 ${f.ml}`}>
          <div className="text-center text-[17.800px] leading-[24px] font-bold whitespace-nowrap text-[#ffff33]">{f.title}</div>
          <div className={`flex text-[13.200px] leading-[20px] text-[#10286a] ${f.pad}`}>
            <div className={f.a}>Fleet</div>
            <div className={`text-center ${f.b}`}>{f.unit}</div>
          </div>
          {f.rows.map(([a, b]) => (
            <div key={a} className={`flex text-[12.600px] leading-[20px] font-bold text-[#f4f7fc] underline underline-offset-2 ${f.pad}`}>
              <div className={f.a}>{a}</div>
              <div className={`text-center ${f.b}`}>{b}</div>
            </div>
          ))}
        </div>
      ))}
    </div>
  );
}

/* ----------------------------------------------------------------- page */

export default function App() {
  return (
    <div className="h-[2354px] w-[1591px] overflow-hidden border-t border-l border-white bg-[#305496]">
      <Header />
      <div className="flex items-start">
        <Sidebar />
        <main className="mt-[17px] ml-[19px] h-[1884px] w-[1336px] border border-[#e6ebf6] shadow-[inset_3px_3px_5px_#274880]">
          <h2 className={`${CAL} h-[29px] w-[1284px] text-center text-[19.400px] leading-[31px] font-bold text-[#ffff33]`}>
            Fuel Consumption Per Contract Fleet (Liters)
          </h2>
          <div className="flex items-start pl-[9px]">
            <WeekTable />
            <FleetBars />
            <div className="h-[334px] w-[63px] shrink-0 bg-white pt-[22px] pl-px">
              <div className="h-[19px] w-[34px] rounded-r-[6px] bg-[#fe0000]" />
            </div>
            <p className={`${CAL} w-[79px] px-[4px] pt-[47px] text-center text-[13.900px] leading-[20px] font-bold whitespace-nowrap text-[#eef2fa]`}>
              The red
              <br />
              dot
              <br />
              indicates a
              <br />
              fleet
              <br />
              contract
              <br />
              with too
              <br />
              many
              <br />
              vehicles
              <br />
              with
              <br />
              highest
              <br />
              consumpti
              <br />
              on.
            </p>
          </div>
          <MonthChart />
          <div className="flex h-[291px] items-start pl-[9px]">
            <VehicleChart />
            <div className="pt-px">
              <PieChart />
            </div>
          </div>
          <div className="flex pl-[9px]">
            <Odometers />
            <Distances />
            <Costs />
          </div>
          <div
            className={`${CAL} mt-[31px] ml-[8px] h-[35px] w-[1308px] border-2 border-[#05081a] bg-[#e0e5f3] text-center text-[19.300px] leading-[32px] font-bold whitespace-pre text-[#b00d12] shadow-[3px_4px_4px_#1d3463]`}
          >
            Fleets With Highest Consuption  (L/100km or L/Hour)
          </div>
          <FleetLists />
        </main>
      </div>
    </div>
  );
}
